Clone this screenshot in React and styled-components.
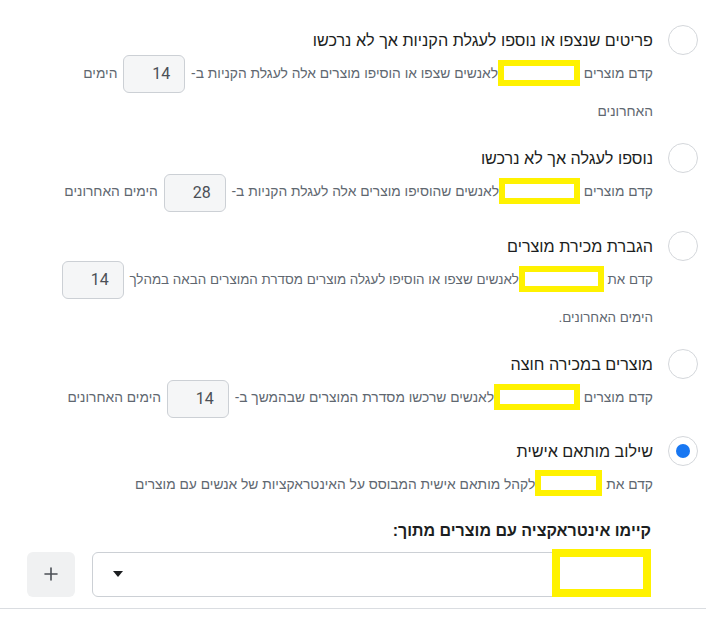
import React from "react";
import styled, { createGlobalStyle } from "styled-components";

const Global = createGlobalStyle`
  html, body { margin: 0; padding: 0; background: #ffffff; }
  body { font-family: "Liberation Sans", Arial, sans-serif; color: #1c1e21; }
`;

const Page = styled.div`
  direction: rtl;
  width: 706px;
  box-sizing: border-box;
  padding-top: 25px;
`;

const OptionList = styled.div`
  display: flex;
  flex-direction: column;
  gap: 15px;
  padding: 0 8px 0 45px;
`;

const OptionRow = styled.label`
  display: flex;
  align-items: flex-start;
  gap: 15px;
  margin-bottom: ${(p) => p.$after || 0}px;
`;

const Radio = styled.span`
  flex: 0 0 auto;
  width: 30px;
  height: 30px;
  box-sizing: border-box;
  border-radius: 50%;
  border: 1px solid #d4d7db;
  background: #fff;
  display: flex;
  align-items: center;
  justify-content: center;
  &::after {
    content: "";
    width: 14px;
    height: 14px;
    border-radius: 50%;
    background: ${(p) => (p.$checked ? "#1877f2" : "transparent")};
  }
`;

const Body = styled.div`
  flex: 1;
  min-width: 0;
`;

const Title = styled.div`
  font-size: 16.2px;
  line-height: 30px;
  color: #1c1e21;
`;

const Desc = styled.div`
  font-size: ${(p) => p.$size || 13.8}px;
  line-height: 38px;
  color: #606770;
`;

const Redact = styled.span`
  display: inline-block;
  box-sizing: border-box;
  width: ${(p) => p.$w}px;
  height: 26px;
  border: 6px solid #fff200;
  background: #ffffff;
  vertical-align: middle;
  margin-top: -3px;
`;

const DaysBox = styled.span`
  display: inline-flex;
  align-items: center;
  box-sizing: border-box;
  width: 62px;
  height: 38px;
  padding: 0 14px;
  margin: 0 2px;
  border: 1px solid #ccd0d5;
  border-radius: 6px;
  background: #f5f6f7;
  vertical-align: middle;
  font-family: Roboto, "Liberation Sans", Arial, sans-serif;
  font-size: 16px;
  font-weight: 400;
  color: #4b4f56;
  line-height: 1;
`;

const Section = styled.div`
  padding: 15px 55px 0 27px;
`;

const Heading = styled.div`
  font-size: 16px;
  font-weight: 700;
  line-height: 24px;
  color: #1c1e21;
  margin-bottom: 9px;
`;

const PickerRow = styled.div`
  display: flex;
  align-items: center;
  gap: 17px;
`;

const Picker = styled.div`
  position: relative;
  flex: 1;
  height: 45px;
  box-sizing: border-box;
  border: 1px solid #ccd0d5;
  border-radius: 6px;
  background: #fff;
  display: flex;
  align-items: center;
  justify-content: flex-end;
  padding-left: 20px;
`;

const Caret = styled.span`
  width: 0;
  height: 0;
  border-left: 5px solid transparent;
  border-right: 5px solid transparent;
  border-top: 6px solid #1c1e21;
`;

const PickerRedact = styled.span`
  position: absolute;
  top: -4px;
  right: -1px;
  width: 99px;
  height: 48px;
  box-sizing: border-box;
  border: 8px solid #fff200;
  background: #fff;
`;

const AddButton = styled.button`
  flex: 0 0 auto;
  width: 48px;
  height: 45px;
  border: none;
  border-radius: 6px;
  background: #f0f1f2;
  color: #1c1e21;
  display: flex;
  align-items: center;
  justify-content: center;
  padding: 0;
`;

const Divider = styled.div`
  margin-top: 11px;
  height: 1px;
  background: #dadde1;
`;

const Days = ({ n }) => <DaysBox>{n}</DaysBox>;

export default function App() {
  return (
    <>
      <Global />
      <Page>
        <OptionList>
          <OptionRow $after={-3}>
            <Radio />
            <Body>
              <Title>פריטים שנצפו או נוספו לעגלת הקניות אך לא נרכשו</Title>
              <Desc>
                קדם מוצרים <Redact $w={82} />לאנשים שצפו או הוסיפו מוצרים אלה לעגלת הקניות ב- <Days n={14} /> הימים האחרונים
              </Desc>
            </Body>
          </OptionRow>
          <OptionRow $after={4}>
            <Radio />
            <Body>
              <Title>נוספו לעגלה אך לא נרכשו</Title>
              <Desc>
                קדם מוצרים <Redact $w={81} />לאנשים שהוסיפו מוצרים אלה לעגלת הקניות ב- <Days n={28} /> הימים האחרונים
              </Desc>
            </Body>
          </OptionRow>
          <OptionRow $after={-3}>
            <Radio />
            <Body>
              <Title>הגברת מכירת מוצרים</Title>
              <Desc $size={13.4}>
                קדם את <Redact $w={85} />לאנשים שצפו או הוסיפו לעגלה מוצרים מסדרת המוצרים הבאה במהלך <Days n={14} /> הימים&nbsp;האחרונים.
              </Desc>
            </Body>
          </OptionRow>
          <OptionRow $after={3}>
            <Radio />
            <Body>
              <Title>מוצרים במכירה חוצה</Title>
              <Desc>
                קדם מוצרים <Redact $w={86} />לאנשים שרכשו מסדרת המוצרים שבהמשך ב- <Days n={14} /> הימים האחרונים
              </Desc>
            </Body>
          </OptionRow>
          <OptionRow>
            <Radio $checked />
            <Body>
              <Title>שילוב מותאם אישית</Title>
              <Desc>
                קדם את <Redact $w={67} />לקהל מותאם אישית המבוסס על האינטראקציות של אנשים עם מוצרים
              </Desc>
            </Body>
          </OptionRow>
        </OptionList>
        <Section>
          <Heading>קיימו אינטראקציה עם מוצרים מתוך:</Heading>
          <PickerRow>
            <Picker>
              <Caret />
              <PickerRedact />
            </Picker>
            <AddButton aria-label="הוספה">
              <svg width="16" height="16" viewBox="0 0 16 16">
                <path d="M8 2v12M2 8h12" stroke="#4b4f56" strokeWidth="1.6" strokeLinecap="round" />
              </svg>
            </AddButton>
          </PickerRow>
        </Section>
        <Divider />
      </Page>
    </>
  );
}
